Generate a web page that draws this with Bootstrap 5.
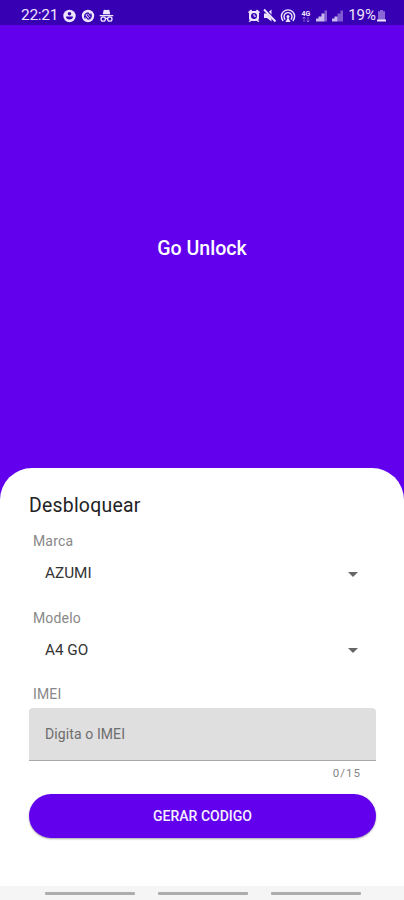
<!DOCTYPE html>
<html lang="pt">
<head>
<meta charset="utf-8">
<meta name="viewport" content="width=device-width, initial-scale=1">
<title>Go Unlock</title>
<link href="https://cdn.jsdelivr.net/npm/bootstrap@5.3.0/dist/css/bootstrap.min.css" rel="stylesheet">
<style>
  body { font-family: Roboto, "Liberation Sans", sans-serif; background: #6200ee; height: 900px; overflow: hidden; line-height: 1; }
  .status-bar { height: 25px; background: #3700b3; color: #eee6ff; padding: 8px 18px 0 21px; font-size: 15px; }
  .status-bar svg { display: block; fill: #eee6ff; }
  .clock { font-size: 15.5px; width: 37px; letter-spacing: -.3px; }
  .hero { height: 443px; }
  .hero h1 { font-size: 19.6px; font-weight: 500; margin-top: 5px; }
  .sheet { height: 418px; border-radius: 32px 32px 0 0; padding: 26px 28px 0 29px; }
  .sheet h2 { font-size: 19.4px; line-height: 24px; margin: 0 0 14px; color: #222; letter-spacing: .25px; }
  .field-label { height: 18px; line-height: 18px; font-size: 14px; color: #888; padding-left: 4px; letter-spacing: .15px; }
  .picker { height: 48px; padding: 0 18px 0 16px; font-size: 15.3px; color: #333; border: 0; background: none; margin-bottom: 10.5px; }
  .imei { height: 53px; margin-top: 4.5px; border: 0; border-bottom: 1.5px solid #a9a9a9; border-radius: 4px 4px 0 0; background: #dfdfdf; padding: 0 16px; font-size: 14px; letter-spacing: .1px; }
  .imei::placeholder { color: #6d6d6d; opacity: 1; }
  .counter { height: 33.5px; padding: 7px 15px 0 0; font-size: 11.5px; color: #858585; letter-spacing: 1px; }
  .generate { height: 44px; background: #6200ee; color: #f5efff; font-size: 14px; font-weight: 500; letter-spacing: 0; border: 0; box-shadow: 0 1px 2px rgba(0,0,0,.35); }
  .nav-strip { height: 14px; background: #f5f5f5; padding: 6px 43.5px 0 44.5px; }
  .nav-strip span { width: 90px; height: 3px; border-radius: 1px; background: #adadad; }
</style>
<script src="https://cdn.jsdelivr.net/npm/bootstrap@5.3.0/dist/js/bootstrap.bundle.min.js"></script>
</head>
<body class="d-flex flex-column">
  <header class="status-bar d-flex align-items-start justify-content-between">
    <div class="d-flex align-items-center">
      <span class="clock pt-0">22:21</span>
      <svg class="ms-1" width="15" height="15" viewBox="0 0 15 15"><circle cx="7.5" cy="8" r="6.2"/><circle cx="7.5" cy="5.7" r="1.8" fill="#3700b3"/><path d="M4 8.600h7c0 1.900-1.400 3-3.500 3S4 10.500 4 8.600z" fill="#3700b3"/></svg>
      <svg class="ms-1" width="15" height="15" viewBox="0 0 15 15"><circle cx="7" cy="8" r="6.200"/><g fill="none" stroke="#3700b3" stroke-width="1.2"><path d="M4.400 10.500C2.500 8 4.200 5 7 4.800L10.500 9M9.600 5.500c1.900 2.500.2 5.500-2.600 5.700L3.700 7M5.800 6.400l3 3.500"/></g></svg>
      <svg style="margin-left:3px" width="15" height="15" viewBox="0 0 15 15"><path d="M4.500 2.500Q5 1.200 6.500 2h2Q10 1.200 10.500 2.500l.7 3.800H3.800zM.7 7h13.600v1.300H.7z"/><g fill="none" stroke="#eee6ff" stroke-width="1.3"><circle cx="4.200" cy="11" r="2.200"/><circle cx="10.800" cy="11" r="2.200"/><path d="M6.400 10.700q1.100-.8 2.200 0"/></g></svg>
    </div>
    <div class="d-flex align-items-center">
      <svg width="14" height="15" viewBox="0 0 14 15"><path d="M1 4L4 1.500l1.200 1.200L2 5.200zM13 4l-3-2.500-1.200 1.200L12 5.200z"/><rect x="2" y="3" width="10" height="10" rx="3"/><path d="M1.500 13.500L4 11l1 1-2 2zM12.500 13.500L10 11l-1 1 2 2z"/><circle cx="7" cy="8" r="3" fill="#3700b3"/><path d="M7 6v2.200h2" fill="none" stroke="#eee6ff"/></svg>
      <svg style="margin-left:2px" width="14" height="15" viewBox="0 0 14 15"><path d="M1 5.500h3L8.500 1.500v12L4 10H1z"/><path d="M2 1.500l11 12" stroke="#3700b3" stroke-width="2.600"/><path d="M1 1.500l11.500 12" stroke="#eee6ff" stroke-width="1.900"/></svg>
      <svg style="margin-left:3px" width="16" height="15" viewBox="0 0 16 15"><g fill="none" stroke="#eee6ff" stroke-width="1.400"><path d="M3.200 13A6.600 6.600 0 1 1 12.800 13M5.200 11.500a4 4 0 1 1 5.600 0"/></g><circle cx="8" cy="8.500" r="1.500"/><path d="M8 9l2.500 5h-5z"/></svg>
      <svg style="margin-left:4px" width="13" height="15" viewBox="0 0 13 15"><text x="1.500" y="7.500" font-family="Roboto" font-weight="700" font-size="7">4G</text><path d="M4 14V9M2.500 10.500L4 9l1.500 1.500M8 9v5M6.500 12.500L8 14l1.500-1.500" stroke="#eee6ff" stroke-width=".8" fill="none" opacity=".5"/></svg>
      <svg style="margin-left:3px" width="11" height="15" viewBox="0 0 11 15"><path d="M0 10.500h2.500V13.500H0zM2.500 8.500h3v5h-3zM5.500 5.500h3v8h-3z" opacity=".8"/><path d="M8.500 2.500H11v11H8.500z" opacity=".4"/></svg>
      <svg style="margin-left:5px" width="11" height="15" viewBox="0 0 11 15"><path d="M0 10.500h2.500V13.500H0zM2.500 8.500h3v5h-3z" opacity=".8"/><path d="M5.500 5.500h3v8h-3zM8.500 2.500H11v11H8.500z" opacity=".4"/></svg>
      <span style="margin-left:5px">19%</span>
      <svg style="margin-left:1px" width="9" height="15" viewBox="0 0 9 15"><path d="M3 2h3v1.300h2V12H1V3.300h2z" opacity=".45"/><path d="M0 11.500h9v2H0z"/></svg>
    </div>
  </header>

  <section class="hero d-flex align-items-center justify-content-center text-white">
    <h1 class="mb-0">Go Unlock</h1>
  </section>

  <main class="sheet bg-white">
    <h2 class="fw-normal">Desbloquear</h2>
    <div class="field-label">Marca</div>
    <button class="picker d-flex align-items-center justify-content-between w-100" type="button">
      <span>AZUMI</span>
      <svg width="10" height="5" viewBox="0 0 10 5"><path d="M0 0h10L5 5z" fill="#666"/></svg>
    </button>
    <div class="field-label">Modelo</div>
    <button class="picker d-flex align-items-center justify-content-between w-100" type="button">
      <span>A4 GO</span>
      <svg width="10" height="5" viewBox="0 0 10 5"><path d="M0 0h10L5 5z" fill="#666"/></svg>
    </button>
    <label class="field-label d-block" for="imei">IMEI</label>
    <input class="imei d-block w-100" id="imei" type="text" maxlength="15" placeholder="Digita o IMEI">
    <div class="counter text-end">0/15</div>
    <button class="btn generate rounded-pill w-100 p-0" type="button">GERAR CODIGO</button>
  </main>
  <footer class="nav-strip d-flex justify-content-between"><span></span><span></span><span></span></footer>
</body>
</html>
